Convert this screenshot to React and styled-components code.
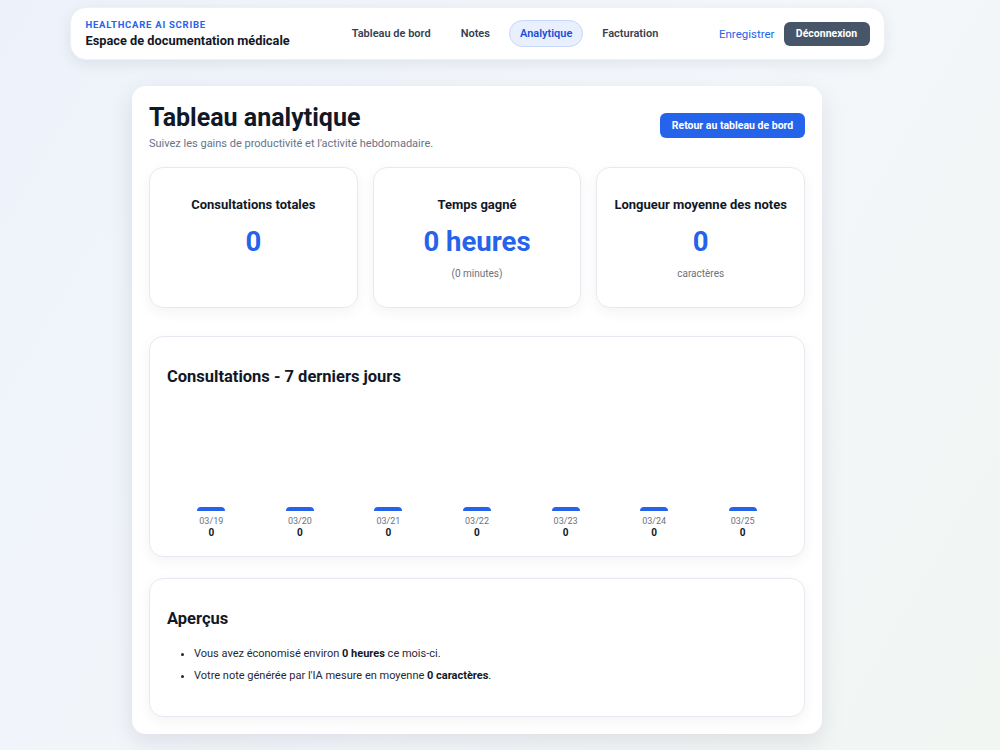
import React from "react";
import styled, { createGlobalStyle } from "styled-components";

const GlobalStyle = createGlobalStyle`
  html, body {
    margin: 0;
    padding: 0;
  }
  body {
    font-family: Roboto, "Liberation Sans", sans-serif;
    color: #111827;
    background: linear-gradient(120deg, #edf2fa 0%, #f4f7fb 55%, #f1f6f3 100%);
    min-height: 750px;
  }
`;

const Page = styled.div`
  width: 954px;
  display: flex;
  flex-direction: column;
  align-items: center;
  padding: 7px 0 20px;
`;

const Header = styled.header`
  width: 815px;
  height: 53px;
  box-sizing: border-box;
  background: #fff;
  border-radius: 16px;
  box-shadow: 0 4px 14px rgba(15, 23, 42, 0.08);
  border: 1px solid #eef1f6;
  display: flex;
  align-items: center;
  padding: 0 14px 0 15px;
`;

const Brand = styled.div`
  display: flex;
  flex-direction: column;
  gap: 3px;
`;

const Kicker = styled.span`
  font-size: 9.5px;
  font-weight: 700;
  letter-spacing: 0.75px;
  color: #2563eb;
`;

const BrandTitle = styled.span`
  font-size: 12.8px;
  font-weight: 700;
  color: #111827;
`;

const Nav = styled.nav`
  display: flex;
  align-items: center;
  gap: 8px;
  margin-left: 51px;
`;

const NavLink = styled.a`
  font-size: 11px;
  font-weight: 600;
  padding: 6px 10px;
  border-radius: 999px;
  border: 1px solid ${(p) => (p.$active ? "#c7d7fb" : "transparent")};
  background: ${(p) => (p.$active ? "#e8effd" : "transparent")};
  color: ${(p) => (p.$active ? "#1d4ed8" : "#374151")};
`;

const Right = styled.div`
  margin-left: auto;
  display: flex;
  align-items: center;
  gap: 9px;
`;

const TextLink = styled.a`
  font-size: 11.5px;
  color: #2563eb;
`;

const LogoutButton = styled.button`
  font-family: Roboto, "Liberation Sans", sans-serif;
  background: #475569;
  color: #fff;
  border: none;
  border-radius: 6px;
  height: 24px;
  width: 86px;
  font-size: 10.5px;
  font-weight: 700;
`;

const Main = styled.main`
  margin-top: 26px;
  width: 690px;
  box-sizing: border-box;
  background: #fff;
  border-radius: 14px;
  box-shadow: 0 8px 24px rgba(15, 23, 42, 0.1);
  padding: 17px;
  display: flex;
  flex-direction: column;
`;

const TopRow = styled.div`
  display: flex;
  justify-content: space-between;
  align-items: flex-start;
`;

const Title = styled.h1`
  margin: 0;
  font-size: 25px;
  font-weight: 700;
  line-height: 30px;
  color: #111827;
`;

const Subtitle = styled.p`
  margin: 4px 0 0;
  font-size: 11px;
  color: #64748b;
`;

const PrimaryButton = styled.button`
  margin-top: 10px;
  font-family: Roboto, "Liberation Sans", sans-serif;
  background: #2563eb;
  color: #fff;
  border: none;
  border-radius: 6px;
  height: 25px;
  width: 145px;
  font-size: 10.5px;
  font-weight: 700;
`;

const StatGrid = styled.div`
  margin-top: 17px;
  display: grid;
  grid-template-columns: repeat(3, 1fr);
  gap: 15px;
`;

const Card = styled.section`
  background: #fff;
  border: 1px solid #e6eaf0;
  border-radius: 14px;
  box-shadow: 0 4px 14px rgba(15, 23, 42, 0.05);
  box-sizing: border-box;
`;

const StatCard = styled(Card)`
  height: 141px;
  padding-top: 29px;
  display: flex;
  flex-direction: column;
  align-items: center;
`;

const StatLabel = styled.h3`
  margin: 0;
  font-size: 13px;
  line-height: 16px;
  font-weight: 700;
  color: #111827;
`;

const StatValue = styled.div`
  margin-top: 14px;
  font-size: 27.5px;
  line-height: 30px;
  font-weight: 700;
  color: #2563eb;
`;

const StatNote = styled.div`
  margin-top: 10px;
  font-size: 10px;
  line-height: 14px;
  color: #6b7280;
`;

const ChartCard = styled(Card)`
  margin-top: 28px;
  padding: 17px;
`;

const SectionTitle = styled.h2`
  margin: 13px 0 0;
  font-size: 16.5px;
  line-height: 20px;
  font-weight: 700;
  color: #111827;
`;

const Chart = styled.div`
  display: grid;
  grid-template-columns: repeat(7, 1fr);
`;

const Column = styled.div`
  display: flex;
  flex-direction: column;
  align-items: center;
`;

const BarArea = styled.div`
  height: 124px;
  display: flex;
  align-items: flex-end;
`;

const Bar = styled.div`
  width: 28px;
  background: #2563eb;
  border-radius: 4px 4px 0 0;
`;

const DayLabel = styled.div`
  margin-top: 4px;
  font-size: 9px;
  line-height: 12px;
  color: #6b7280;
`;

const DayCount = styled.div`
  font-size: 10px;
  line-height: 12px;
  font-weight: 700;
  color: #111827;
`;

const InsightCard = styled(Card)`
  margin-top: 21px;
  padding: 17px 17px 32px;
`;

const List = styled.ul`
  margin: 17px 0 0;
  padding-left: 27px;
  font-size: 11px;
  line-height: 16px;
  color: #1f2937;
  li + li {
    margin-top: 6px;
  }
  b {
    color: #111827;
  }
`;

const stats = [
  { label: "Consultations totales", value: "0" },
  { label: "Temps gagné", value: "0 heures", note: "(0 minutes)" },
  { label: "Longueur moyenne des notes", value: "0", note: "caractères" },
];

const days = [
  { date: "03/19", count: 0 },
  { date: "03/20", count: 0 },
  { date: "03/21", count: 0 },
  { date: "03/22", count: 0 },
  { date: "03/23", count: 0 },
  { date: "03/24", count: 0 },
  { date: "03/25", count: 0 },
];

export default function App() {
  const max = Math.max(1, ...days.map((d) => d.count));
  return (
    <>
      <GlobalStyle />
      <Page>
        <Header>
          <Brand>
            <Kicker>HEALTHCARE AI SCRIBE</Kicker>
            <BrandTitle>Espace de documentation médicale</BrandTitle>
          </Brand>
          <Nav>
            <NavLink>Tableau de bord</NavLink>
            <NavLink>Notes</NavLink>
            <NavLink $active>Analytique</NavLink>
            <NavLink>Facturation</NavLink>
          </Nav>
          <Right>
            <TextLink>Enregistrer</TextLink>
            <LogoutButton>Déconnexion</LogoutButton>
          </Right>
        </Header>

        <Main>
          <TopRow>
            <div>
              <Title>Tableau analytique</Title>
              <Subtitle>
                Suivez les gains de productivité et l'activité hebdomadaire.
              </Subtitle>
            </div>
            <PrimaryButton>Retour au tableau de bord</PrimaryButton>
          </TopRow>

          <StatGrid>
            {stats.map((s) => (
              <StatCard key={s.label}>
                <StatLabel>{s.label}</StatLabel>
                <StatValue>{s.value}</StatValue>
                {s.note && <StatNote>{s.note}</StatNote>}
              </StatCard>
            ))}
          </StatGrid>

          <ChartCard>
            <SectionTitle>Consultations - 7 derniers jours</SectionTitle>
            <Chart>
              {days.map((d) => (
                <Column key={d.date}>
                  <BarArea>
                    <Bar style={{ height: Math.max(4, (d.count / max) * 110) }} />
                  </BarArea>
                  <DayLabel>{d.date}</DayLabel>
                  <DayCount>{d.count}</DayCount>
                </Column>
              ))}
            </Chart>
          </ChartCard>

          <InsightCard>
            <SectionTitle>Aperçus</SectionTitle>
            <List>
              <li>
                Vous avez économisé environ <b>0 heures</b> ce mois-ci.
              </li>
              <li>
                Votre note générée par l'IA mesure en moyenne{" "}
                <b>0 caractères</b>.
              </li>
            </List>
          </InsightCard>
        </Main>
      </Page>
    </>
  );
}
